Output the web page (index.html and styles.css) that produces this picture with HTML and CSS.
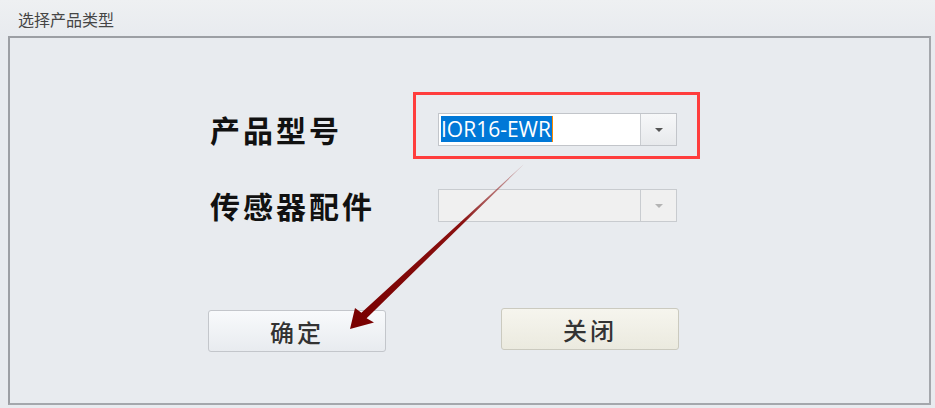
FILE: index.html
```html
<!DOCTYPE html>
<html lang="zh-CN">

<head>
    <meta charset="UTF-8">
    <title>选择产品类型</title>
    <link rel="stylesheet" href="styles.css">
</head>

<body>
    <div class="window">
        <div class="title">选择产品类型</div>

        <div class="panel">
            <div class="form">
                <div class="label">产品型号</div>
                <div class="combo">
                    <div class="combo-text"><span class="selected">IOR16-EWR</span></div>
                    <div class="combo-btn"><span class="caret"></span></div>
                </div>

                <div class="label">传感器配件</div>
                <div class="combo disabled">
                    <div class="combo-text"></div>
                    <div class="combo-btn"><span class="caret"></span></div>
                </div>
            </div>

            <div class="buttons">
                <button class="btn btn-ok">确定</button>
                <button class="btn btn-close">关闭</button>
            </div>
        </div>

        <!-- 标注：红框 + 箭头 -->
        <div class="highlight"></div>
        <svg class="arrow" width="935" height="408" viewBox="0 0 935 408">
            <defs>
                <linearGradient id="shaft" x1="523" y1="165" x2="350" y2="328" gradientUnits="userSpaceOnUse">
                    <stop offset="0" stop-color="#b36a6a" stop-opacity="0.5" />
                    <stop offset="0.35" stop-color="#8a1010" />
                    <stop offset="1" stop-color="#780000" />
                </linearGradient>
            </defs>
            <polygon fill="url(#shaft)"
                points="523.6,164.6 366.6,318.2 374,322.5 350,329 355,308 361.4,312.8 522.4,165.4" />
        </svg>
    </div>
</body>

</html>
```

FILE: styles.css
```css
body {
    margin: 0;
    padding: 0;
    background: #e8ebef;
    font-family: "Noto Sans CJK SC", "Noto Sans", sans-serif;
}

.window {
    position: relative;
    width: 935px;
    height: 408px;
    overflow: hidden;
    background: linear-gradient(#eef0f2, #e8ebef 36px);
}

.title {
    height: 36px;
    padding-left: 18px;
    font-size: 16px;
    line-height: 38px;
    color: #454545;
}

.panel {
    margin-left: 8px;
    width: 919px;
    height: 365px;
    border: 2px solid #a4a7ac;
    border-top-color: #9c9fa4;
    border-left-color: #9c9fa4;
    background: #e8ebef;
}

.form {
    display: grid;
    grid-template-columns: 228px 239px;
    row-gap: 43px;
    align-items: center;
    margin-top: 75px;
    margin-left: 200px;
}

.label {
    font-size: 30px;
    font-weight: 700;
    letter-spacing: 3px;
    color: #111;
    line-height: 33px;
}

.combo {
    display: flex;
    height: 33px;
    box-sizing: border-box;
    border: 1px solid #c2c5ca;
    background: #fff;
}

.combo-text {
    flex: 1;
    padding: 2px 0 0 2px;
}

.selected {
    display: inline-block;
    background: #0078d7;
    color: #fff;
    font-family: "Open Sans", sans-serif;
    font-size: 21px;
    line-height: 26px;
    padding-right: 1px;
    border-right: 1px solid #ff8c00;
}

.combo-btn {
    width: 35px;
    display: flex;
    align-items: center;
    justify-content: center;
    border-left: 1px solid #c9ccd0;
    background: linear-gradient(#f7f8f9, #e7e9ec);
}

.caret {
    width: 0;
    height: 0;
    border-left: 4px solid transparent;
    border-right: 4px solid transparent;
    border-top: 4px solid #555;
}

.combo.disabled {
    background: #f0f0f0;
    border-color: #c8cbcf;
}

.combo.disabled .combo-btn {
    background: #f0f0f0;
}

.combo.disabled .caret {
    border-top-color: #b4b4b4;
}

.buttons {
    display: flex;
    gap: 115px;
    margin-top: 88px;
    margin-left: 198px;
}

.btn {
    width: 178px;
    height: 42px;
    border: 1px solid #c3c6cb;
    border-radius: 3px;
    font-family: "Noto Sans CJK SC", sans-serif;
    font-size: 24px;
    font-weight: 500;
    letter-spacing: 3px;
    color: #333;
    padding: 0;
}

.btn-ok {
    background: linear-gradient(#f8fafc, #e8ebef);
}

.btn-close {
    margin-top: -2px;
    border-color: #cbcabf;
    background: linear-gradient(#f6f5ee, #ebeadf);
}

.highlight {
    position: absolute;
    left: 413px;
    top: 92px;
    width: 281px;
    height: 61px;
    border: 3px solid #ff3d3d;
}

.arrow {
    position: absolute;
    left: 0;
    top: 0;
}
```
